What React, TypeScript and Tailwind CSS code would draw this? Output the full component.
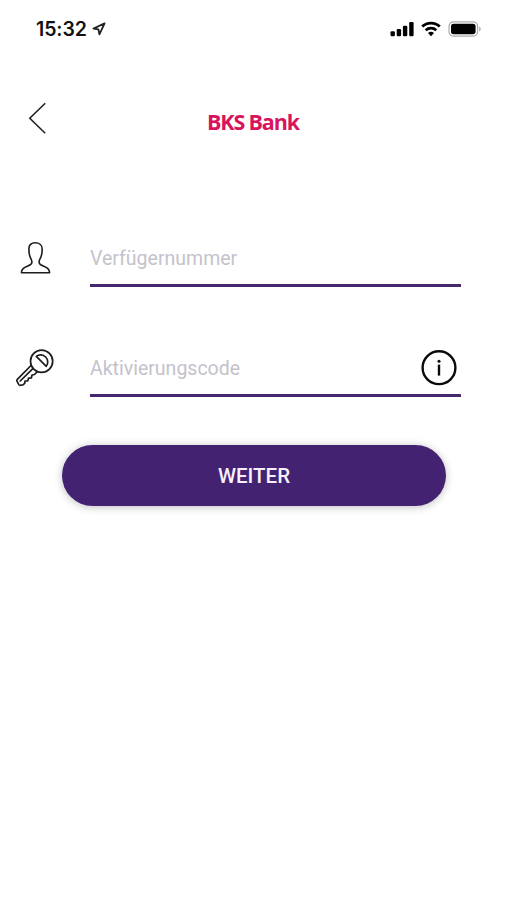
import { ReactNode } from 'react';

function StatusBar() {
  return (
    <div className="flex h-14 items-center justify-between pl-9 pr-[25px] pt-px">
      <div className="flex items-center">
        <span className="w-[52px] whitespace-nowrap font-['Inter',sans-serif] text-[19.5px] font-semibold leading-6 tracking-[-0.1px] text-[#111]">
          15:32
        </span>
        <svg className="ml-1 h-[14px] w-[14px]" viewBox="0 0 14 14" fill="none">
          <path d="M12.6 1.3 1.5 6.6l4.9.8 1 5z" stroke="#222" strokeWidth="1.8" strokeLinejoin="round" />
        </svg>
      </div>
      <div className="flex items-center">
        <svg className="h-4 w-6" viewBox="0 0 24 16" fill="#000">
          <rect x="0.5" y="10.2" width="4.4" height="5" rx="1.2" />
          <rect x="6.7" y="8" width="4.4" height="7.2" rx="1.2" />
          <rect x="12.9" y="4.7" width="4.4" height="10.5" rx="1.2" />
          <rect x="19.2" y="1" width="4.4" height="14.2" rx="1.2" />
        </svg>
        <svg className="ml-[7px] h-4 w-5" viewBox="0 0 20 16" fill="none" stroke="#000">
          <path d="M1.2 5.6a12.7 12.7 0 0 1 17.6 0" strokeWidth="2.8" />
          <path d="M4.7 9.3a7.7 7.7 0 0 1 10.6 0" strokeWidth="2.7" />
          <path d="M10 15.2 7 12.1a4.3 4.3 0 0 1 6 0z" fill="#000" stroke="none" />
        </svg>
        <svg className="ml-[7px] h-4 w-[34px]" viewBox="0 0 34 16">
          <rect x="1" y="0.9" width="28.6" height="14.2" rx="4.4" fill="none" stroke="#aaa" strokeWidth="1.2" />
          <rect x="3" y="2.8" width="24.6" height="10.4" rx="2.6" fill="#000" />
          <path d="M31.2 5.5c2 .9 2 4.1 0 5z" fill="#aaa" />
        </svg>
      </div>
    </div>
  );
}

function UserIcon() {
  return (
    <svg className="h-9 w-9" viewBox="0 0 36 36" fill="none" stroke="#1c1c1c" strokeWidth="1.6" strokeLinejoin="round">
      <path d="M17.4 2.8c-3.9 0-6.5 2.4-6.5 6.3 0 3.6.5 6.7 1.7 9 .9 1.7 1.5 2.7 1.3 4.3-.3 2.3-2.7 3.2-5.2 4-3.4 1.1-5.2 2.4-5.3 6.3h28.2c-.1-3.9-1.9-5.2-5.3-6.3-2.5-.8-4.9-1.7-5.2-4-.2-1.6.4-2.6 1.3-4.3 1.2-2.3 1.8-5.4 1.8-9 0-3.9-2.8-6.3-6.8-6.3z" />
    </svg>
  );
}

function KeyIcon() {
  return (
    <svg className="h-10 w-10" viewBox="0 0 40 40" fill="none" stroke="#1c1c1c" strokeWidth="1.7" strokeLinejoin="round" strokeLinecap="round">
      <circle cx="26.6" cy="13.2" r="11.1" />
      <path d="M21.3 8.4a7.1 7.1 0 0 1 10 9.9z" />
      <path d="M16 17.5 2.3 31.3c-.6.6-.7 1.4-.2 2.1l1.7 3.2c.4.6 1.1.8 1.7.6l2.4-.3 1.8-1.5.3-2.4 2.8-.2.8-2.7 2.8-.3.6-2.8 2.5-.5 2.9-2.8" />
      <path d="M5.2 33 17.6 20.8" />
    </svg>
  );
}

function InfoIcon() {
  return (
    <svg className="mr-1 h-9 w-9 shrink-0" viewBox="0 0 36 36">
      <circle cx="18" cy="17.7" r="16.4" fill="none" stroke="#0a0a0a" strokeWidth="2.4" />
      <circle cx="18" cy="11.2" r="1.5" fill="#0a0a0a" />
      <path d="M18 14.6v11" stroke="#0a0a0a" strokeWidth="2.4" />
    </svg>
  );
}

interface FieldProps {
  placeholder: string;
  icon: ReactNode;
  action?: ReactNode;
}

function Field({ placeholder, icon, action }: FieldProps) {
  return (
    <div className="flex h-[55px] pl-[15px] pr-[46px]">
      <div className="flex w-[75px] shrink-0 items-start pt-1.5">{icon}</div>
      <div className="flex min-w-0 flex-1 items-center border-b-[3px] border-[#46286f]">
        <input
          type="text"
          placeholder={placeholder}
          className="min-w-0 flex-1 bg-transparent pt-px font-['Roboto',sans-serif] text-[19.5px] leading-6 text-[#222] outline-none placeholder:text-[#c5c2cc]"
        />
        {action}
      </div>
    </div>
  );
}

export default function App() {
  return (
    <div className="h-[900px] w-[507px] overflow-hidden bg-white">
      <StatusBar />

      <header className="mt-11 grid h-11 grid-cols-[207px_1fr] items-start">
        <button type="button" aria-label="Zurück" className="pl-7">
          <svg className="h-9 w-[18px]" viewBox="0 0 18 36" fill="none" stroke="#222" strokeWidth="1.6">
            <path d="M17.2 3.2 1.8 18.2l15.4 15" />
          </svg>
        </button>
        <h1 className="pt-2 font-['Open_Sans',sans-serif] text-[21.5px] font-bold leading-7 tracking-[-1.15px] text-[#d8145c]">
          BKS Bank
        </h1>
      </header>

      <form className="mt-[88px]">
        <Field placeholder="Verfügernummer" icon={<div className="pl-[3px] pt-0.5"><UserIcon /></div>} />
        <div className="mt-[55px]">
          <Field placeholder="Aktivierungscode" icon={<KeyIcon />} action={<InfoIcon />} />
        </div>
        <button
          type="button"
          className="ml-[62px] mt-12 h-[61px] w-[384px] rounded-full bg-[#432371] pt-px font-['Roboto',sans-serif] text-[20.5px] font-medium text-[#f7effc] shadow-[0_1px_8px_rgba(0,0,0,0.25)]"
        >
          WEITER
        </button>
      </form>
    </div>
  );
}
